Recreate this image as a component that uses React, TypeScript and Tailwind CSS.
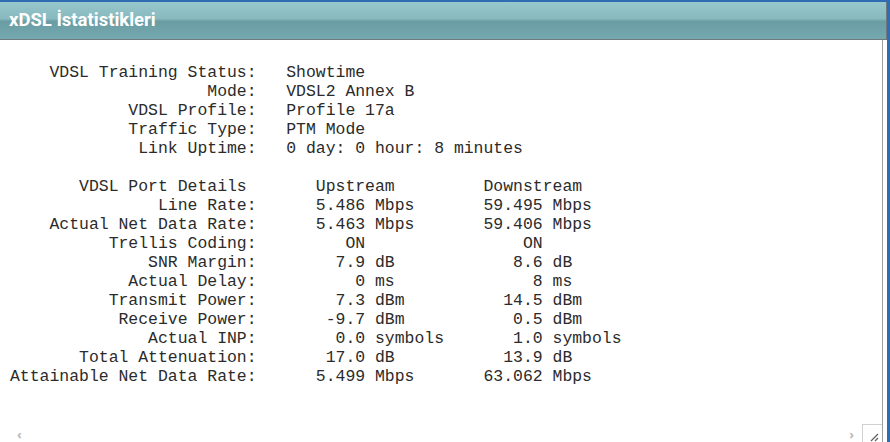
import React from "react";

const mono = { fontFamily: '"Liberation Mono", "Courier New", monospace' };

type Row = { label: string; up: string; upUnit?: string; down: string; downUnit?: string };

const summary: [string, string][] = [
  ["VDSL Training Status:", "Showtime"],
  ["Mode:", "VDSL2 Annex B"],
  ["VDSL Profile:", "Profile 17a"],
  ["Traffic Type:", "PTM Mode"],
  ["Link Uptime:", "0 day: 0 hour: 8 minutes"],
];

const rows: Row[] = [
  { label: "Line Rate:", up: "5.486", upUnit: "Mbps", down: "59.495", downUnit: "Mbps" },
  { label: "Actual Net Data Rate:", up: "5.463", upUnit: "Mbps", down: "59.406", downUnit: "Mbps" },
  { label: "Trellis Coding:", up: "ON", down: "ON" },
  { label: "SNR Margin:", up: "7.9", upUnit: "dB", down: "8.6", downUnit: "dB" },
  { label: "Actual Delay:", up: "0", upUnit: "ms", down: "8", downUnit: "ms" },
  { label: "Transmit Power:", up: "7.3", upUnit: "dBm", down: "14.5", downUnit: "dBm" },
  { label: "Receive Power:", up: "-9.7", upUnit: "dBm", down: "0.5", downUnit: "dBm" },
  { label: "Actual INP:", up: "0.0", upUnit: "symbols", down: "1.0", downUnit: "symbols" },
  { label: "Total Attenuation:", up: "17.0", upUnit: "dB", down: "13.9", downUnit: "dB" },
  { label: "Attainable Net Data Rate:", up: "5.499", upUnit: "Mbps", down: "63.062", downUnit: "Mbps" },
];

// fixed-width report, same as the router's text output
function buildText() {
  const lines: string[] = [];
  for (const [k, v] of summary) lines.push(k.padStart(25) + "   " + v);
  lines.push("");
  lines.push("VDSL Port Details".padStart(24).padEnd(31) + "Upstream".padEnd(17) + "Downstream");
  for (const r of rows) {
    const up = (r.up.padStart(36) + (r.upUnit ? " " + r.upUnit : "")).padEnd(48);
    const down = r.down.padStart(6) + (r.downUnit ? " " + r.downUnit : "");
    lines.push((r.label.padStart(25) + up.slice(25)) + down);
  }
  return lines.join("\n");
}

export default function App() {
  return (
    <div className="w-[890px] h-[442px] bg-white flex flex-col overflow-hidden border-t-2 border-r-[3px] border-[#2f6cb2]">
      <div className="h-[38px] shrink-0 flex items-center pl-[9px] bg-[linear-gradient(to_bottom,#95c7cd_0%,#87b9bf_45%,#6a9ca4_52%,#74a9af_100%)] border-b border-r border-[#6f7a7c]">
        <h1 className="text-white font-bold text-[18.5px] leading-none" style={{ fontFamily: "Roboto, Arial, sans-serif" }}>
          xDSL İstatistikleri
        </h1>
      </div>
      <div className="flex-1 flex flex-col mr-[4px] border-r border-[#9aa0a3]">
        <pre className="flex-1 pt-[23px] pl-[10px] text-[16.44px] leading-[19px] text-[#2b2b2b]" style={mono}>
          {buildText()}
        </pre>
        <div className="h-[19px] flex items-center justify-between">
          <span className="ml-[17px] mt-[3px] text-[#b9b9b9] text-[13px] font-bold leading-none">‹</span>
          <div className="flex items-center h-full">
            <span className="mr-[8px] mt-[3px] text-[#b9b9b9] text-[13px] font-bold leading-none">›</span>
            <div className="w-[20px] h-[18px] border-l border-t border-[#d0d0d0] relative">
              <svg width="12" height="12" viewBox="0 0 12 12" className="absolute right-[2px] bottom-0">
                <path d="M3 11 L10 4 M7 11 L10 8" stroke="#606060" strokeWidth="1.2" fill="none" />
              </svg>
            </div>
          </div>
        </div>
      </div>
    </div>
  );
}
